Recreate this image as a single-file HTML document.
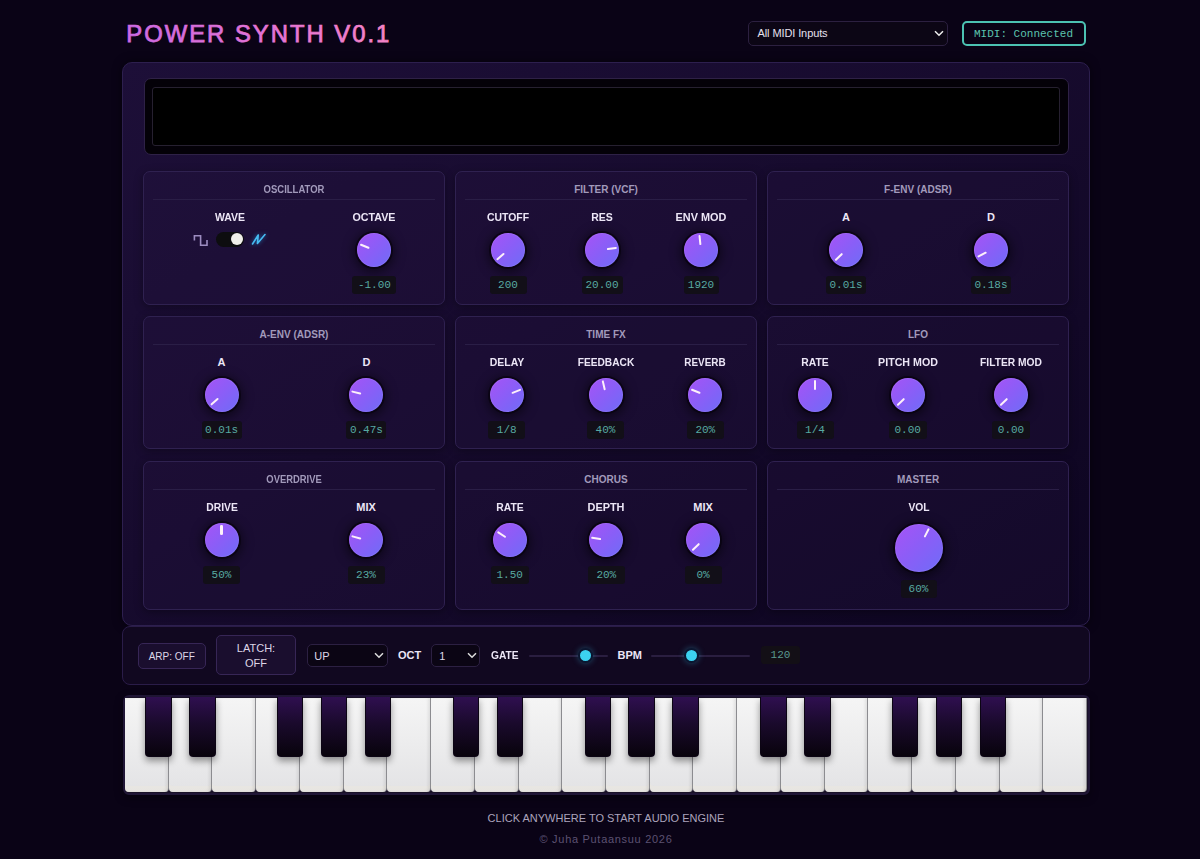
<!DOCTYPE html>
<html><head><meta charset="utf-8"><title>Power Synth</title>
<style>
*{box-sizing:border-box;margin:0;padding:0}
html,body{width:1200px;height:859px;overflow:hidden}
body{position:relative;font-family:"Liberation Sans",sans-serif;color:#e8e2f2;background:#0a0316}
.abs{position:absolute}
.midisel{position:absolute;left:748px;top:21px;width:200px;height:24.5px;border:1.5px solid #2c2040;border-radius:5px;background:#0c0615;
 font-size:11px;color:#e6e0ee;padding:4.6px 0 0 8.5px;letter-spacing:-0.1px}
.midistat{position:absolute;left:962px;top:21px;width:124px;height:25px;border:2px solid #4cc2b2;border-radius:5px;
 font-family:"Liberation Mono",monospace;font-size:11px;color:#5cc4ae;padding:4.5px 0 0 10px;white-space:nowrap}
.main{position:absolute;left:122px;top:62px;width:968px;height:564px;border:1.3px solid #2d1f4e;border-radius:10px;box-shadow:0 0 10px rgba(0,0,0,0.5);
 background:linear-gradient(150deg,#1d0f38 0%,#170b2e 45%,#0d0520 100%)}
.vis{position:absolute;left:144px;top:78px;width:925px;height:77px;border:1.3px solid #2e2146;border-radius:7px;background:#040108}
.vis2{position:absolute;left:152px;top:87px;width:908px;height:59px;border:1.5px solid #262030;border-radius:3px;background:#000}
.panel{position:absolute;border:1.2px solid #2f2150;border-radius:7px;background:rgba(40,20,70,0.28);box-shadow:0 2px 8px rgba(0,0,0,0.35)}
.ptitle{position:absolute;text-align:center;font-size:10px;font-weight:bold;color:#a29abb;line-height:12px;margin-left:-6px}
.pline{position:absolute;height:1px;background:#2a1e46}
.clabel{position:absolute;width:120px;text-align:center;font-size:11px;font-weight:bold;color:#ece6f6;line-height:12px;white-space:nowrap}
.knob{position:absolute;border-radius:50%;background:linear-gradient(135deg,#a653f6 0%,#8a5ef7 50%,#6e6cf7 100%);
 box-shadow:0 0 0 2px rgba(5,2,10,0.55),0 2px 11px 3px rgba(0,0,0,0.55), inset 0 0 0 1px rgba(255,255,255,0.08)}
.ind{position:absolute;left:0;top:0;width:100%;height:100%}
.ind i{position:absolute;left:50%;top:1.5px;width:2.6px;height:10px;margin-left:-1.3px;border-radius:1.3px;background:#fdf0fa}
.val{position:absolute;height:18px;border-radius:3px;background:#120f18;text-align:center;font-family:"Liberation Mono",monospace;font-size:11px;color:#58aaa2;line-height:18px;white-space:nowrap}
.tog{position:absolute;width:28px;height:15.5px;border-radius:8px;background:#0d0d0f}
.tog i{position:absolute;left:15px;top:1.6px;width:12.3px;height:12.3px;border-radius:50%;background:#f0efea}
.cbar{position:absolute;left:122px;top:626px;width:968px;height:59px;border:1.3px solid #2a1c48;border-radius:8px;background:#110820}
.btn{position:absolute;border:1.3px solid #372656;border-radius:5px;background:#1a0e2e;font-size:11px;color:#ddd6e8;text-align:center}
.sel{position:absolute;border:1.3px solid #2c2042;border-radius:5px;background:#0b0514;font-size:11px;color:#ddd6e8}
.blabel{position:absolute;font-size:11px;font-weight:bold;color:#ece6f6;line-height:12px}
.track{position:absolute;height:2px;background:#2a1e40;border-radius:1px}
.thumb{position:absolute;width:15px;height:15px;border-radius:50%;background:#3cd2f0;border:2px solid #0b1630;box-shadow:0 0 6px rgba(60,200,240,0.35)}
.kbd{position:absolute;left:122.5px;top:695px;width:967px;height:100px;border-radius:6px;background:#1a1228;border:2px solid #201636;box-shadow:0 3px 8px rgba(0,0,0,0.4)}
.wk{position:absolute;top:698px;height:94px;border-radius:0 0 4px 4px;background:linear-gradient(180deg,#f5f5f5,#e3e3e5);border-right:1.5px solid #8c8c90;box-shadow:inset -2px 0 3px rgba(0,0,0,0.08), inset 0 -6px 0 rgba(235,232,222,0.5)}
.bk{position:absolute;top:697px;width:26.4px;height:59.8px;border-radius:0 0 4px 4px;border:1px solid #0c0514;border-top:none;background:linear-gradient(180deg,#2f0f50 0%,#1a0a2c 45%,#08030c 100%);box-shadow:0 4px 7px rgba(0,0,0,0.4)}
.foot1{position:absolute;left:6px;width:1200px;top:812px;text-align:center;font-size:11px;color:#aca4bc;line-height:13px}
.foot2{position:absolute;left:6px;width:1200px;top:832.5px;text-align:center;font-size:11px;color:#5c5272;letter-spacing:0.7px;line-height:13px}
</style></head><body>
<svg class="abs" style="left:120px;top:14px" width="300" height="36" viewBox="0 0 300 36">
<defs><linearGradient id="tg" x1="8" y1="0" x2="270" y2="0" gradientUnits="userSpaceOnUse"><stop offset="0" stop-color="#cc6ae2"/><stop offset="0.55" stop-color="#e474d4"/><stop offset="1" stop-color="#f484c6"/></linearGradient></defs>
<text x="6.3" y="27.8" font-family="Liberation Sans" font-size="23.8" letter-spacing="2.02" fill="url(#tg)" stroke="url(#tg)" stroke-width="0.75">POWER SYNTH V0.1</text>
</svg>
<div class="midisel">All MIDI Inputs</div>
<svg class="abs" style="left:934px;top:30px" width="10" height="7" viewBox="0 0 10 7"><path d="M1 1.2 L5 5.2 L9 1.2" fill="none" stroke="#eee" stroke-width="1.5"/></svg>
<div class="midistat">MIDI: Connected</div>
<div class="main"></div>
<div class="vis"></div>
<div class="vis2"></div>
<div class="panel" style="left:143px;top:171.4px;width:302px;height:133.5px"></div><div class="ptitle" style="left:149px;top:183.9px;width:302px;transform:scaleX(0.95)">OSCILLATOR</div><div class="pline" style="left:153px;top:199.4px;width:282px"></div><div class="clabel" style="left:169.5px;top:211.4px;transform:scaleX(0.952)">WAVE</div><svg class="abs" style="left:192px;top:233px" width="17" height="15" viewBox="0 0 17 15"><path d="M2.4 7.6 V2.7 H8.6 V12.2 H15 V7.1" fill="none" stroke="#9c8cc0" stroke-width="1.6"/></svg><div class="tog" style="left:215.5px;top:231.5px"><i></i></div><svg class="abs" style="left:250px;top:232px;filter:drop-shadow(0 0 2px rgba(40,160,240,0.6))" width="17" height="15" viewBox="0 0 17 15"><path d="M2.5 12 L8.25 3 L7.4 11.5 L15 2.5" fill="none" stroke="#46bcf2" stroke-width="1.6" stroke-linejoin="round" stroke-linecap="round"/></svg><div class="clabel" style="left:314.4px;top:211.4px;transform:scaleX(0.972)">OCTAVE</div><div class="knob" style="left:357.4px;top:233.4px;width:34px;height:34px"><div class="ind" style="transform:rotate(-68deg)"><i></i></div></div><div class="val" style="left:352.4px;top:276.0px;width:44px">-1.00</div><div class="panel" style="left:455px;top:171.4px;width:302px;height:133.5px"></div><div class="ptitle" style="left:461px;top:183.9px;width:302px;transform:scaleX(1)">FILTER (VCF)</div><div class="pline" style="left:465px;top:199.4px;width:282px"></div><div class="clabel" style="left:448.0px;top:211.4px;transform:scaleX(0.949)">CUTOFF</div><div class="knob" style="left:491.0px;top:233.4px;width:34px;height:34px"><div class="ind" style="transform:rotate(-131deg)"><i></i></div></div><div class="val" style="left:489.5px;top:276.0px;width:37px">200</div><div class="clabel" style="left:542.0px;top:211.4px;transform:scaleX(0.955)">RES</div><div class="knob" style="left:585.0px;top:233.4px;width:34px;height:34px"><div class="ind" style="transform:rotate(81.5deg)"><i></i></div></div><div class="val" style="left:581.5px;top:276.0px;width:41px">20.00</div><div class="clabel" style="left:641.0px;top:211.4px;transform:scaleX(0.99)">ENV MOD</div><div class="knob" style="left:684.0px;top:233.4px;width:34px;height:34px"><div class="ind" style="transform:rotate(-6deg)"><i></i></div></div><div class="val" style="left:683.5px;top:276.0px;width:35px">1920</div><div class="panel" style="left:767px;top:171.4px;width:302px;height:133.5px"></div><div class="ptitle" style="left:773px;top:183.9px;width:302px;transform:scaleX(1)">F-ENV (ADSR)</div><div class="pline" style="left:777px;top:199.4px;width:282px"></div><div class="clabel" style="left:786.0px;top:211.4px;transform:scaleX(1)">A</div><div class="knob" style="left:829.0px;top:233.4px;width:34px;height:34px"><div class="ind" style="transform:rotate(-134deg)"><i></i></div></div><div class="val" style="left:826.0px;top:276.0px;width:40px">0.01s</div><div class="clabel" style="left:931.0px;top:211.4px;transform:scaleX(1)">D</div><div class="knob" style="left:974.0px;top:233.4px;width:34px;height:34px"><div class="ind" style="transform:rotate(-117deg)"><i></i></div></div><div class="val" style="left:971.0px;top:276.0px;width:40px">0.18s</div><div class="panel" style="left:143px;top:316.2px;width:302px;height:133.2px"></div><div class="ptitle" style="left:149px;top:328.7px;width:302px;transform:scaleX(1)">A-ENV (ADSR)</div><div class="pline" style="left:153px;top:344.2px;width:282px"></div><div class="clabel" style="left:161.6px;top:356.2px;transform:scaleX(1)">A</div><div class="knob" style="left:204.6px;top:378.2px;width:34px;height:34px"><div class="ind" style="transform:rotate(-132deg)"><i></i></div></div><div class="val" style="left:201.6px;top:420.8px;width:40px">0.01s</div><div class="clabel" style="left:306.4px;top:356.2px;transform:scaleX(1)">D</div><div class="knob" style="left:349.4px;top:378.2px;width:34px;height:34px"><div class="ind" style="transform:rotate(-76deg)"><i></i></div></div><div class="val" style="left:346.4px;top:420.8px;width:40px">0.47s</div><div class="panel" style="left:455px;top:316.2px;width:302px;height:133.2px"></div><div class="ptitle" style="left:461px;top:328.7px;width:302px;transform:scaleX(1)">TIME FX</div><div class="pline" style="left:465px;top:344.2px;width:282px"></div><div class="clabel" style="left:446.7px;top:356.2px;transform:scaleX(0.951)">DELAY</div><div class="knob" style="left:489.7px;top:378.2px;width:34px;height:34px"><div class="ind" style="transform:rotate(68.6deg)"><i></i></div></div><div class="val" style="left:488.2px;top:420.8px;width:37px">1/8</div><div class="clabel" style="left:545.5px;top:356.2px;transform:scaleX(0.925)">FEEDBACK</div><div class="knob" style="left:588.5px;top:378.2px;width:34px;height:34px"><div class="ind" style="transform:rotate(-13deg)"><i></i></div></div><div class="val" style="left:587.0px;top:420.8px;width:37px">40%</div><div class="clabel" style="left:645.3px;top:356.2px;transform:scaleX(0.9)">REVERB</div><div class="knob" style="left:688.3px;top:378.2px;width:34px;height:34px"><div class="ind" style="transform:rotate(-68deg)"><i></i></div></div><div class="val" style="left:686.8px;top:420.8px;width:37px">20%</div><div class="panel" style="left:767px;top:316.2px;width:302px;height:133.2px"></div><div class="ptitle" style="left:773px;top:328.7px;width:302px;transform:scaleX(1)">LFO</div><div class="pline" style="left:777px;top:344.2px;width:282px"></div><div class="clabel" style="left:755.0px;top:356.2px;transform:scaleX(0.943)">RATE</div><div class="knob" style="left:798.0px;top:378.2px;width:34px;height:34px"><div class="ind" style="transform:rotate(0deg)"><i></i></div></div><div class="val" style="left:796.5px;top:420.8px;width:37px">1/4</div><div class="clabel" style="left:847.7px;top:356.2px;transform:scaleX(0.969)">PITCH MOD</div><div class="knob" style="left:890.7px;top:378.2px;width:34px;height:34px"><div class="ind" style="transform:rotate(-134deg)"><i></i></div></div><div class="val" style="left:888.7px;top:420.8px;width:38px">0.00</div><div class="clabel" style="left:951.0px;top:356.2px;transform:scaleX(0.932)">FILTER MOD</div><div class="knob" style="left:994.0px;top:378.2px;width:34px;height:34px"><div class="ind" style="transform:rotate(-134deg)"><i></i></div></div><div class="val" style="left:992.0px;top:420.8px;width:38px">0.00</div><div class="panel" style="left:143px;top:461px;width:302px;height:149.2px"></div><div class="ptitle" style="left:149px;top:473.5px;width:302px;transform:scaleX(0.94)">OVERDRIVE</div><div class="pline" style="left:153px;top:489px;width:282px"></div><div class="clabel" style="left:161.5px;top:501.0px;transform:scaleX(0.939)">DRIVE</div><div class="knob" style="left:204.5px;top:523.0px;width:34px;height:34px"><div class="ind" style="transform:rotate(0deg)"><i></i></div></div><div class="val" style="left:203.0px;top:565.6px;width:37px">50%</div><div class="clabel" style="left:306.0px;top:501.0px;transform:scaleX(1)">MIX</div><div class="knob" style="left:349.0px;top:523.0px;width:34px;height:34px"><div class="ind" style="transform:rotate(-75deg)"><i></i></div></div><div class="val" style="left:347.5px;top:565.6px;width:37px">23%</div><div class="panel" style="left:455px;top:461px;width:302px;height:149.2px"></div><div class="ptitle" style="left:461px;top:473.5px;width:302px;transform:scaleX(1)">CHORUS</div><div class="pline" style="left:465px;top:489px;width:282px"></div><div class="clabel" style="left:449.7px;top:501.0px;transform:scaleX(0.943)">RATE</div><div class="knob" style="left:492.7px;top:523.0px;width:34px;height:34px"><div class="ind" style="transform:rotate(-57deg)"><i></i></div></div><div class="val" style="left:490.7px;top:565.6px;width:38px">1.50</div><div class="clabel" style="left:546.3px;top:501.0px;transform:scaleX(0.992)">DEPTH</div><div class="knob" style="left:589.3px;top:523.0px;width:34px;height:34px"><div class="ind" style="transform:rotate(-81deg)"><i></i></div></div><div class="val" style="left:587.8px;top:565.6px;width:37px">20%</div><div class="clabel" style="left:643.0px;top:501.0px;transform:scaleX(1)">MIX</div><div class="knob" style="left:686.0px;top:523.0px;width:34px;height:34px"><div class="ind" style="transform:rotate(-134deg)"><i></i></div></div><div class="val" style="left:684.5px;top:565.6px;width:37px">0%</div><div class="panel" style="left:767px;top:461px;width:302px;height:149.2px"></div><div class="ptitle" style="left:773px;top:473.5px;width:302px;transform:scaleX(1)">MASTER</div><div class="pline" style="left:777px;top:489px;width:282px"></div><div class="clabel" style="left:858.5px;top:501.0px;transform:scaleX(0.936)">VOL</div><div class="knob" style="left:894.5px;top:523.5px;width:48px;height:48px"><div class="ind" style="transform:rotate(27deg)"><i></i></div></div><div class="val" style="left:900.5px;top:579.7px;width:36px">60%</div>
<div class="cbar"></div>
<div class="btn" style="left:137.5px;top:642.5px;width:68.5px;height:26px;padding-top:7px;font-size:10px">ARP: OFF</div>
<div class="btn" style="left:216px;top:635px;width:80px;height:40px;padding-top:4.6px;line-height:15px">LATCH:<br>OFF</div>
<div class="sel" style="left:306.5px;top:643.5px;width:81px;height:23px;padding:5px 0 0 6.8px">UP</div>
<svg class="abs" style="left:374px;top:652px" width="10" height="7" viewBox="0 0 10 7"><path d="M1 1.2 L5 5.2 L9 1.2" fill="none" stroke="#ddd" stroke-width="1.5"/></svg>
<div class="blabel" style="left:398px;top:649.3px">OCT</div>
<div class="sel" style="left:431px;top:643.5px;width:49px;height:23px;padding:5px 0 0 7.2px">1</div>
<svg class="abs" style="left:467px;top:652px" width="10" height="7" viewBox="0 0 10 7"><path d="M1 1.2 L5 5.2 L9 1.2" fill="none" stroke="#ddd" stroke-width="1.5"/></svg>
<div class="blabel" style="left:490.5px;top:649.3px;transform:scaleX(0.93);transform-origin:0 0">GATE</div>
<div class="track" style="left:528.5px;top:654.5px;width:79px"></div>
<div class="thumb" style="left:578px;top:648px"></div>
<div class="blabel" style="left:617.5px;top:649.3px">BPM</div>
<div class="track" style="left:651px;top:654.5px;width:99px"></div>
<div class="thumb" style="left:683.5px;top:648px"></div>
<div class="val" style="left:761px;top:646px;width:39px;height:18px;color:#5a9a90;background:#130f16">120</div>
<div class="kbd"></div>
<div class="wk" style="left:125.00px;width:43.73px"></div><div class="wk" style="left:168.73px;width:43.73px"></div><div class="wk" style="left:212.46px;width:43.73px"></div><div class="wk" style="left:256.19px;width:43.73px"></div><div class="wk" style="left:299.92px;width:43.73px"></div><div class="wk" style="left:343.65px;width:43.73px"></div><div class="wk" style="left:387.38px;width:43.73px"></div><div class="wk" style="left:431.11px;width:43.73px"></div><div class="wk" style="left:474.84px;width:43.73px"></div><div class="wk" style="left:518.57px;width:43.73px"></div><div class="wk" style="left:562.30px;width:43.73px"></div><div class="wk" style="left:606.03px;width:43.73px"></div><div class="wk" style="left:649.76px;width:43.73px"></div><div class="wk" style="left:693.49px;width:43.73px"></div><div class="wk" style="left:737.22px;width:43.73px"></div><div class="wk" style="left:780.95px;width:43.73px"></div><div class="wk" style="left:824.68px;width:43.73px"></div><div class="wk" style="left:868.41px;width:43.73px"></div><div class="wk" style="left:912.14px;width:43.73px"></div><div class="wk" style="left:955.87px;width:43.73px"></div><div class="wk" style="left:999.60px;width:43.73px"></div><div class="wk" style="left:1043.33px;width:43.73px"></div>
<div class="bk" style="left:145.23px"></div><div class="bk" style="left:189.16px"></div><div class="bk" style="left:277.02px"></div><div class="bk" style="left:320.95px"></div><div class="bk" style="left:364.88px"></div><div class="bk" style="left:452.74px"></div><div class="bk" style="left:496.67px"></div><div class="bk" style="left:584.53px"></div><div class="bk" style="left:628.46px"></div><div class="bk" style="left:672.39px"></div><div class="bk" style="left:760.25px"></div><div class="bk" style="left:804.18px"></div><div class="bk" style="left:892.04px"></div><div class="bk" style="left:935.97px"></div><div class="bk" style="left:979.90px"></div>
<div class="foot1">CLICK ANYWHERE TO START AUDIO ENGINE</div>
<div class="foot2">© Juha Putaansuu 2026</div>
</body></html>
